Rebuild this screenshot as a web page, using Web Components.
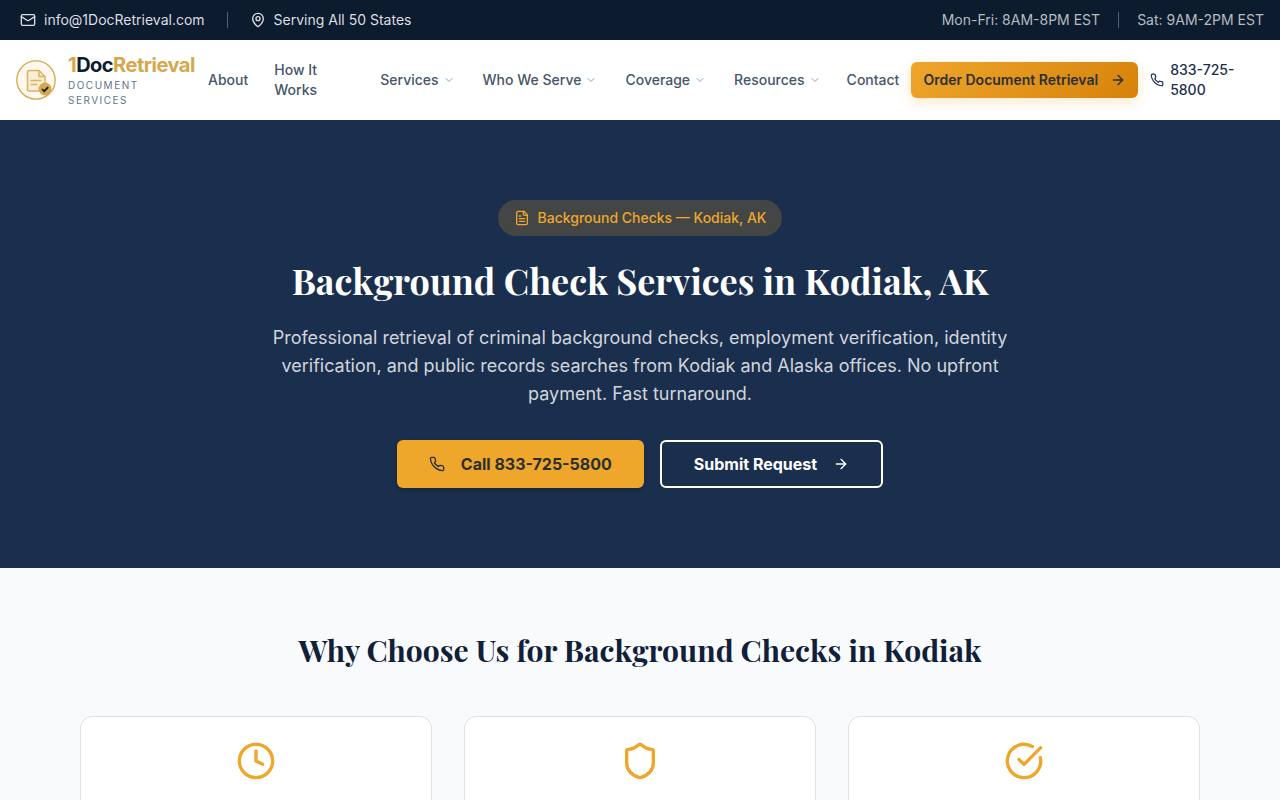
<!DOCTYPE html>
<html lang="en">
<head>
<meta charset="utf-8">
<meta name="viewport" content="width=device-width, initial-scale=1">
<title>Background Check Services in Kodiak, AK</title>
<style>
:root{--navy-dark:#0c1b2d;--navy:#1a2f4d;--gold:#eea62b;--logo-gold:#d4a84b;--slate:#475569;--serif:"Playfair Display","Liberation Serif",serif}
body{margin:0;background:#f9fafc;font:14px/20px Inter,"Liberation Sans",sans-serif;color:var(--navy-dark)}
</style>
</head>
<body>
<top-bar></top-bar>
<site-header></site-header>
<main>
<hero-section></hero-section>
<why-section>
<feature-card icon="clock"></feature-card>
<feature-card icon="shield"></feature-card>
<feature-card icon="check"></feature-card>
</why-section>
</main>
<script>
const icons={
mail:'<rect width="20" height="16" x="2" y="4" rx="2"/><path d="m22 7-8.97 5.7a1.94 1.94 0 0 1-2.06 0L2 7"/>',
pin:'<path d="M20 10c0 4.993-5.539 10.193-7.399 11.799a1 1 0 0 1-1.202 0C9.539 20.193 4 14.993 4 10a8 8 0 0 1 16 0"/><circle cx="12" cy="10" r="3"/>',
chevron:'<path d="m6 9 6 6 6-6"/>',
arrow:'<path d="M5 12h14"/><path d="m12 5 7 7-7 7"/>',
phone:'<path d="M22 16.92v3a2 2 0 0 1-2.18 2 19.79 19.79 0 0 1-8.63-3.07 19.5 19.5 0 0 1-6-6 19.79 19.79 0 0 1-3.07-8.67A2 2 0 0 1 4.11 2h3a2 2 0 0 1 2 1.72 12.84 12.84 0 0 0 .7 2.81 2 2 0 0 1-.45 2.11L8.09 9.91a16 16 0 0 0 6 6l1.27-1.27a2 2 0 0 1 2.11-.45 12.84 12.84 0 0 0 2.81.7A2 2 0 0 1 22 16.92z"/>',
file:'<path d="M15 2H6a2 2 0 0 0-2 2v16a2 2 0 0 0 2 2h12a2 2 0 0 0 2-2V7Z"/><path d="M14 2v4a2 2 0 0 0 2 2h4"/><path d="M10 9H8"/><path d="M16 13H8"/><path d="M16 17H8"/>',
clock:'<circle cx="12" cy="12" r="10"/><path d="M12 6v6l4 2"/>',
shield:'<path d="M20 13c0 5-3.5 7.5-7.66 8.95a1 1 0 0 1-.67-.01C7.5 20.5 4 18 4 13V6a1 1 0 0 1 1-1c2 0 4.5-1.2 6.24-2.72a1.17 1.17 0 0 1 1.52 0C14.51 3.81 17 5 19 5a1 1 0 0 1 1 1z"/>',
check:'<path d="M21.801 10A10 10 0 1 1 17 3.335"/><path d="m9 11 3 3L22 4"/>'
};
const define=(name,html)=>customElements.define(name,class extends HTMLElement{
constructor(){super();this.attachShadow({mode:'open'}).innerHTML=html}
});
customElements.define('line-icon',class extends HTMLElement{
connectedCallback(){
if(!this.shadowRoot)this.attachShadow({mode:'open'});
const s=this.getAttribute('size')||16;
this.shadowRoot.innerHTML=`<style>:host{display:block;flex:none}svg{display:block}</style><svg width="${s}" height="${s}" viewBox="0 0 24 24" fill="none" stroke="currentColor" stroke-width="2" stroke-linecap="round" stroke-linejoin="round" aria-hidden="true">${icons[this.getAttribute('name')]}</svg>`;
}
});
define('top-bar',`<style>
:host{display:block;background:var(--navy-dark);color:#dbdee2}
.bar{display:flex;justify-content:space-between;align-items:center;padding:10px 16px 10px 20px}
.group{display:flex;align-items:center;gap:22px}
.hours{gap:18px;color:#b6bbc0}
.item{display:flex;align-items:center;gap:8px;color:inherit;text-decoration:none}
.rule{width:1px;height:16px;background:#566170}
</style>
<div class="bar"><div class="group"><a class="item" href="mailto:info@1DocRetrieval.com"><line-icon name="mail"></line-icon>info@1DocRetrieval.com</a><span class="rule"></span><span class="item"><line-icon name="pin"></line-icon>Serving All 50 States</span></div>
<div class="group hours"><span>Mon-Fri: 8AM-8PM EST</span><span class="rule"></span><span>Sat: 9AM-2PM EST</span></div></div>`);
define('brand-logo',`<style>
:host{display:block}
a{display:flex;align-items:center;gap:12px;text-decoration:none;color:var(--navy-dark)}
svg{display:block;flex:none}
.name{display:block;font-size:20px;line-height:26px;font-weight:700;letter-spacing:-0.5px}
.gold{color:var(--logo-gold)}
.tag{display:block;width:100px;font-size:10px;line-height:15px;font-weight:400;letter-spacing:1.5px;text-transform:uppercase;color:#64748b}
</style>
<a href="#"><svg width="40" height="40" viewBox="0 0 40 40" fill="none" aria-hidden="true"><circle cx="20" cy="20" r="19.2" fill="#fcf8ef" stroke="#d4a84b" stroke-width="1.3"/><path d="M13 10.5h10l6 6V29.5a1.5 1.5 0 0 1-1.5 1.5H13a1.5 1.5 0 0 1-1.5-1.5V12a1.5 1.5 0 0 1 1.5-1.5Z" fill="#f8edd6" stroke="#dcb45e" stroke-width="1.5"/><path d="M23 10.5v6h6M14.5 20.5h11M14.5 24.5h7" stroke="#dcb45e" stroke-width="1.5"/><circle cx="29" cy="29" r="6.4" fill="#d4a84b"/><path d="m26 29 2.2 2.2 4-4" stroke="#0d1b2d" stroke-width="1.7"/></svg><span><span class="name"><span class="gold">1</span>Doc<span class="gold">Retrieval</span></span><span class="tag">Document Services</span></span></a>`);
customElements.define('nav-item',class extends HTMLElement{
connectedCallback(){
if(!this.shadowRoot)this.attachShadow({mode:'open'});
this.shadowRoot.innerHTML=`<style>
:host{display:block;flex:none}
:host([wrap]){width:104px}
a{display:flex;align-items:center;gap:4px;padding:8px 12px;color:var(--slate);font-weight:500;text-decoration:none}
line-icon{color:#94a3b8}
</style><a href="#"><slot></slot>${this.hasAttribute('menu')?'<line-icon name="chevron" size="12"></line-icon>':''}</a>`;
}
});
define('site-header',`<style>
:host{display:block;background:#fff}
header{display:flex;align-items:center;min-height:80px;padding:0 16px}
brand-logo{flex:none;width:180px}
nav{display:flex;align-items:center;gap:2px;flex:none}
nav-item[menu]+nav-item[menu]{margin-left:2px}
.order{display:flex;flex:none;align-items:center;gap:12px;height:36px;padding:0 12px;border:0;border-radius:6px;font:inherit;font-weight:600;color:#2b2f33;background:linear-gradient(135deg,#eea62b,#d6820b);box-shadow:0 4px 12px #eea62b40}
.phone{display:flex;flex:1;min-width:0;align-items:center;gap:6px;padding:8px 12px;color:var(--navy);font-weight:500;text-decoration:none}
</style>
<header><brand-logo></brand-logo><nav><nav-item>About</nav-item><nav-item wrap>How It Works</nav-item><nav-item menu>Services</nav-item><nav-item menu>Who We Serve</nav-item><nav-item menu>Coverage</nav-item><nav-item menu>Resources</nav-item><nav-item>Contact</nav-item></nav><button class="order" type="button">Order Document Retrieval<line-icon name="arrow"></line-icon></button><a class="phone" href="tel:8337255800"><line-icon name="phone" size="14"></line-icon><span>833-725-5800</span></a></header>`);
define('hero-section',`<style>
:host{display:block;background:var(--navy);padding:80px 16px;text-align:center}
.inner{max-width:768px;margin:0 auto}
.badge{display:inline-flex;align-items:center;gap:8px;padding:8px 16px;border-radius:18px;background:#eea62b33;color:var(--gold);font-weight:500;vertical-align:top}
h1{margin:24px 0;font:700 36px/40px var(--serif);color:#fff}
p{margin:0 0 32px;font-size:18px;line-height:28px;color:#d1d5db}
.actions{display:flex;flex-wrap:wrap;justify-content:center;gap:16px}
.actions a,.actions button{box-sizing:border-box;display:flex;align-items:center;gap:16px;height:48px;padding:0 32px;border-radius:6px;font:700 16px/24px Inter,"Liberation Sans",sans-serif;text-decoration:none}
.actions a{background:var(--gold);color:#2b2f33;box-shadow:0 2px 4px #0003}
.actions button{background:none;border:2px solid #fff;color:#fff}
</style>
<div class="inner"><span class="badge"><line-icon name="file"></line-icon>Background Checks — Kodiak, AK</span><h1>Background Check Services in Kodiak, AK</h1><p>Professional retrieval of criminal background checks, employment verification, identity verification, and public records searches from Kodiak and Alaska offices. No upfront payment. Fast turnaround.</p><div class="actions"><a href="tel:8337255800"><line-icon name="phone"></line-icon>Call 833-725-5800</a><button type="button">Submit Request<line-icon name="arrow"></line-icon></button></div></div>`);
define('why-section',`<style>
:host{display:block;padding:64px 16px}
h2{margin:0 0 48px;text-align:center;font:700 30px/36px var(--serif);color:#0f2038}
.grid{display:grid;grid-template-columns:repeat(3,1fr);gap:32px;max-width:1120px;margin:0 auto}
</style>
<h2>Why Choose Us for Background Checks in Kodiak</h2><div class="grid"><slot></slot></div>`);
customElements.define('feature-card',class extends HTMLElement{
connectedCallback(){
if(!this.shadowRoot)this.attachShadow({mode:'open'});
this.shadowRoot.innerHTML=`<style>
:host{box-sizing:border-box;display:flex;justify-content:center;min-height:192px;padding:24px;background:#fff;border:1px solid #dfe2e7;border-radius:12px;color:var(--gold)}
</style><line-icon name="${this.getAttribute('icon')}" size="40"></line-icon>`;
}
});
</script>
</body>
</html>
